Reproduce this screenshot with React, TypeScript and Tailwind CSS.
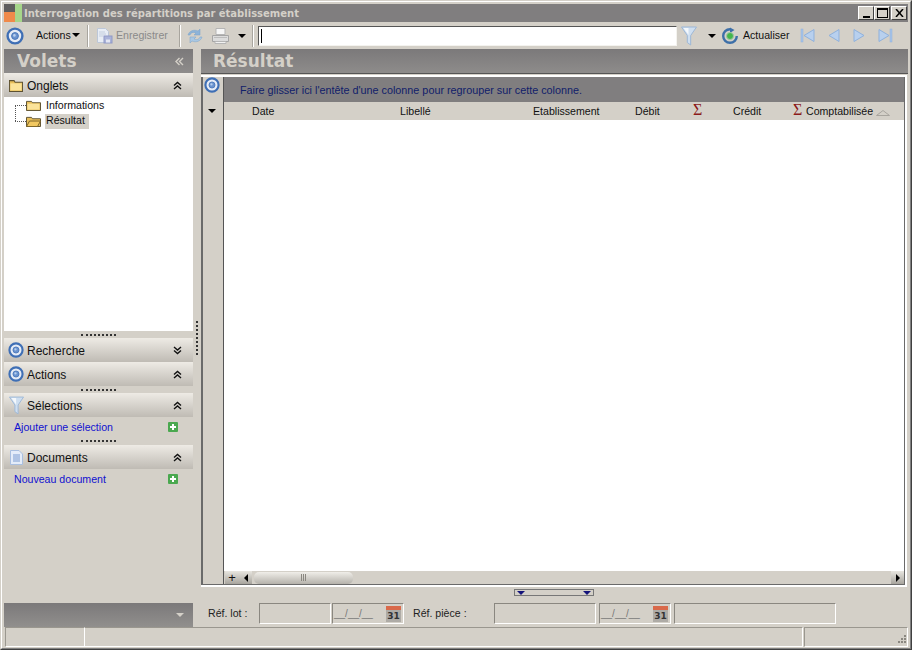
const TargetIcon = ({ size = 18 }: { size?: number }) => (
  <svg width={size} height={size} viewBox="0 0 18 18" className="shrink-0">
    <circle cx="9" cy="9" r="7.4" fill="#e6ecf6" stroke="#3f6fb5" strokeWidth="2.400" />
    <circle cx="9" cy="9" r="3.400" fill="#6a93cf" stroke="#4a78ba" />
    <circle cx="8.400" cy="8.400" r="1.300" fill="#b9d0ee" />
  </svg>
)

const Funnel = ({ size = 16 }: { size?: number }) => (
  <svg width={size} height={size + 4} viewBox="0 0 16 20" className="shrink-0">
    <path d="M.5 1h15L9.700 9.500v9.500l-3.400-2.500V9.500z" fill="#cfdff0" stroke="#9db7d6" />
    <path d="M2.500 2h5L7.500 9z" fill="#f4f8fc" />
  </svg>
)

const Folder = ({ open = false, w = 15, h = 11 }: { open?: boolean; w?: number; h?: number }) => (
  <svg width={w} height={h} viewBox="0 0 15 12" preserveAspectRatio="none" className="shrink-0">
    <path d="M.5 11.500V1.500h5l1 1.500h8v8.500z" fill="#e8bf5a" stroke="#5c5030" />
    {open ? <path d="M.5 11.500l3-6h11l-3 6z" fill="#f2c860" stroke="#7b6226" /> : <path d="M1.500 4h12v6.500h-12z" fill="#fbe39a" />}
  </svg>
)

const ChevronsUp = () => (
  <svg width="9" height="9" viewBox="0 0 9 9" className="shrink-0" fill="none" stroke="#111" strokeWidth="1.400">
    <path d="M1 4.500l3.500-3 3.500 3M1 8l3.500-3 3.500 3" />
  </svg>
)

const ChevronsDown = () => (
  <svg width="9" height="9" viewBox="0 0 9 9" className="shrink-0" fill="none" stroke="#111" strokeWidth="1.400">
    <path d="M1 1l3.500 3 3.500-3M1 4.500l3.500 3 3.500-3" />
  </svg>
)

const Caret = ({ color = "#000" }: { color?: string }) => (
  <svg width="8" height="4" viewBox="0 0 8 4" className="shrink-0">
    <path d="M0 0h8L4 4z" fill={color} />
  </svg>
)

const PlusGreen = () => (
  <svg width="10" height="10" viewBox="0 0 10 10" className="shrink-0">
    <rect width="10" height="10" rx="1" fill="#4aa84f" />
    <path d="M4 2h2v2h2v2H6v2H4V6H2V4h2z" fill="#fff" />
  </svg>
)

const DocIcon = () => (
  <svg width="13" height="15" viewBox="0 0 13 15" className="shrink-0">
    <path d="M.5.500h8.500l3.500 3.500v10.500H.5z" fill="#e4ecf9" stroke="#a9bfe0" />
    <path d="M3 5h7M3 7h7M3 9h7M3 11h7" stroke="#7b9bd0" />
  </svg>
)

const SaveIcon = () => (
  <svg width="18" height="18" viewBox="0 0 18 18" className="shrink-0">
    <path d="M1.500 1.500h8l3 3v11h-11z" fill="#e8edf5" stroke="#bcc7d8" />
    <path d="M3 5h6M3 7h7M3 9h4" stroke="#c3cede" />
    <rect x="8" y="9" width="8" height="7" fill="#aab3d9" stroke="#8f99c6" />
    <rect x="10" y="12.500" width="4" height="3" fill="#e4e7f3" />
  </svg>
)

const RefreshGray = () => (
  <svg width="18" height="18" viewBox="0 0 18 18" className="shrink-0">
    <path d="M2 8c1-4 6-6 10-4l2-2v6H8l2-2c-2-1-5-1-6 2z" fill="#8db3d8" stroke="#7ba2c8" strokeWidth=".5" />
    <path d="M16 10c-1 4-6 6-10 4l-2 2v-6h6l-2 2c2 1 5 1 6-2z" fill="#a9c8e4" stroke="#7ba2c8" strokeWidth=".5" />
  </svg>
)

const Printer = () => (
  <svg width="19" height="18" viewBox="0 0 19 18" className="shrink-0">
    <path d="M5 1.500h9v6H5z" fill="#f6f6f6" stroke="#b5b5b5" />
    <path d="M1.500 8.500h16v6h-16z" fill="#dcdcdc" stroke="#a5a5a5" />
    <path d="M4 14.500h11v2H4z" fill="#f2f2f2" stroke="#b5b5b5" />
    <path d="M3 10.500h13" stroke="#bcbcbc" />
  </svg>
)

const Reload = () => (
  <svg width="18" height="18" viewBox="0 0 18 18" className="shrink-0">
    <path d="M9 2.200a6.800 6.800 0 1 0 6.800 6.800" fill="none" stroke="#3d6fa8" strokeWidth="2.400" />
    <path d="M9 .5l4.500 2.500L9 6z" fill="#3d6fa8" />
    <circle cx="9" cy="9" r="3.500" fill="#43b54a" stroke="#9fc7a6" />
  </svg>
)

const NavIcon = ({ d, bar }: { d: string; bar?: number }) => (
  <svg width="15" height="15" viewBox="0 0 15 15" className="shrink-0">
    <path d={d} fill="#b8d0ee" stroke="#8fb1dc" />
    {bar !== undefined && <rect x={bar} y="1" width="2" height="13" fill="#a6c3e8" stroke="#8fb1dc" strokeWidth=".5" />}
  </svg>
)

const ToolSep = ({ ml }: { ml: string }) => <div className={`h-[22px] w-[2px] shrink-0 border-r border-l border-r-white border-l-[#a8a59e] ${ml}`} />

const WinButton = ({ children, ml = "" }: { children: React.ReactNode; ml?: string }) => (
  <div className={`flex h-[14px] w-[16px] items-center justify-center border border-t-white border-r-[#404040] border-b-[#404040] border-l-white bg-[#d4d0c8] ${ml}`}>
    {children}
  </div>
)

const SectionHeader = ({ icon, label, down }: { icon: React.ReactNode; label: string; down?: boolean }) => (
  <div className="flex h-[24px] shrink-0 items-center bg-linear-to-b from-[#eeebe5] to-[#bfbbb4] pr-[11px] text-[12px] text-[#111]">
    <div className="flex w-[23px] justify-center pl-[1px]">{icon}</div>
    <span className="mt-[1px] flex-1">{label}</span>
    {down ? <ChevronsDown /> : <ChevronsUp />}
  </div>
)

const Grip = ({ h = "h-[7px]" }: { h?: string }) => (
  <div className={`flex shrink-0 items-center justify-center ${h}`}>
    <div className="h-0 w-[35px] border-t-2 border-dotted border-[#333]" />
  </div>
)

const LinkRow = ({ label }: { label: string }) => (
  <div className="flex h-[20px] shrink-0 items-center justify-between pr-[15px] pl-[10px] text-[10.6px] text-[#1010d0]">
    <span className="mt-[1px]">{label}</span>
    <PlusGreen />
  </div>
)

const Sunken = ({ w, children }: { w: string; children?: React.ReactNode }) => (
  <div className={`flex h-[21px] items-center border border-t-[#8a8780] border-r-white border-b-white border-l-[#8a8780] ${w}`}>{children}</div>
)

const DateField = () => (
  <Sunken w="w-[72px]">
    <span className="flex-1 pl-[1px] text-[10px] text-[#777]">__/__/__</span>
    <div className="mr-[2px] flex h-[16px] w-[15px] flex-col bg-[#aeaba6]">
      <div className="h-[4px] bg-[#d9694a]" />
      <span className="text-center font-['DejaVu_Sans',sans-serif] text-[9px] leading-[12px] font-bold text-[#333]">31</span>
    </div>
  </Sunken>
)

const Column = ({ w, label, sigma, pad = "" }: { w: string; label?: string; sigma?: boolean; pad?: string }) => (
  <div className={`flex items-center ${w} ${pad}`}>
    {sigma && <span className="mb-[3px] font-['Liberation_Serif',serif] text-[16px] leading-[14px] text-[#8b1a1a]">Σ</span>}
    {label && <span className="mt-[1px]">{label}</span>}
  </div>
)

const ScrollBtn = ({ children, w }: { children: React.ReactNode; w: string }) => (
  <div className={`flex h-[13px] shrink-0 items-center justify-center bg-linear-to-b from-[#e8e6e0] to-[#a8a59e] ${w}`}>{children}</div>
)

const App = () => {
  return (
    <div className="h-[650px] w-[912px] overflow-hidden border border-t-[#d4d0c8] border-r-[#404040] border-b-[#404040] border-l-[#d4d0c8] font-['Liberation_Sans',sans-serif]">
      <div className="flex h-full flex-col border border-t-white border-r-[#808080] border-b-[#808080] border-l-white bg-[#d4d0c8] px-[2px] pt-[2px] pb-[1px]">
        <div className="flex h-[18px] shrink-0 items-center bg-[#807e7f] pr-[1px]">
          <svg width="18" height="18" viewBox="0 0 18 18" className="shrink-0">
            <rect width="18" height="18" fill="#5f5d5d" />
            <rect x="11" width="7" height="18" fill="#a6d68a" />
            <rect y="8" width="11" height="10" fill="#f08a4a" />
          </svg>
          <span className="ml-[2px] flex-1 font-['DejaVu_Sans',sans-serif] text-[10px] font-bold text-[#d4d0c8]">Interrogation des répartitions par établissement</span>
          <div className="flex">
            <WinButton><div className="mt-[7px] h-[2px] w-[7px] bg-black" /></WinButton>
            <WinButton><div className="h-[10px] w-[11px] border border-t-2 border-black" /></WinButton>
            <WinButton ml="ml-[1px]">
              <svg width="9" height="8" viewBox="0 0 9 8"><path d="M1 0l7 8M8 0L1 8" fill="none" stroke="#000" strokeWidth="1.500" /></svg>
            </WinButton>
          </div>
        </div>

        <div className="flex h-[27px] shrink-0 items-center text-[10.6px]">
          <div className="ml-[2px]"><TargetIcon /></div>
          <div className="ml-[12px] flex w-[44px] items-center justify-between text-[#111]">Actions<Caret /></div>
          <ToolSep ml="ml-[7px]" />
          <div className="ml-[7px]"><SaveIcon /></div>
          <span className="ml-[2px] w-[54px] text-[#8a8a8a]">Enregistrer</span>
          <ToolSep ml="ml-[9px]" />
          <div className="ml-[5px]"><RefreshGray /></div>
          <div className="ml-[7px]"><Printer /></div>
          <div className="ml-[8px]"><Caret /></div>
          <ToolSep ml="ml-[6px]" />
          <div className="ml-[4px] flex h-[20px] w-[419px] shrink-0 items-center border border-t-[#555] border-r-[#f4f3ef] border-b-[#f4f3ef] border-l-[#555] bg-white pl-[2px]">
            <div className="h-[14px] w-px bg-black" />
          </div>
          <div className="ml-[4px]"><Funnel /></div>
          <div className="ml-[11px]"><Caret /></div>
          <div className="ml-[5px]"><Reload /></div>
          <span className="ml-[4px] w-[47px] text-[#111]">Actualiser</span>
          <div className="ml-[10px] flex gap-[11px]">
            <NavIcon d="M14 1.500v12L4 7.500z" bar={1} />
            <NavIcon d="M13 1.500v12L3 7.500z" />
            <NavIcon d="M2 1.500v12l10-6z" />
            <NavIcon d="M1 1.500v12l10-6z" bar={12} />
          </div>
        </div>

        <div className="flex min-h-0 flex-1">
          <div className="flex w-[189px] shrink-0 flex-col">
            <div className="flex h-[24px] shrink-0 items-center justify-between bg-linear-to-b from-[#7b797a] to-[#8e8c8b] pr-[9px] pl-[13px]">
              <span className="font-['DejaVu_Sans',sans-serif] text-[17px] leading-none font-bold text-[#d4d0c8]">Volets</span>
              <svg width="9" height="9" viewBox="0 0 9 9" fill="none" stroke="#d4d0c8" strokeWidth="1.400">
                <path d="M4.500 1l-3.500 3.500 3.500 3.500M8 1L4.500 4.500 8 8" />
              </svg>
            </div>
            <SectionHeader icon={<Folder w={14} h={13} />} label="Onglets" />
            <div className="relative flex h-[234px] shrink-0 flex-col bg-white pl-[11px] text-[10.6px] text-[#111]">
              <div className="absolute top-[8px] left-[11px] h-[16px] w-0 border-l border-dotted border-[#555]" />
              <div className="flex h-[16px] items-center">
                <div className="h-px w-[11px] border-t border-dotted border-[#555]" />
                <Folder />
                <span className="mt-[1px] ml-[5px]">Informations</span>
              </div>
              <div className="flex h-[16px] items-center">
                <div className="h-px w-[11px] border-t border-dotted border-[#555]" />
                <Folder open />
                <span className="ml-[4px] flex h-[15px] w-[44px] items-center bg-[#d4d0c8] pl-[1px]">Résultat</span>
              </div>
            </div>
            <Grip />
            <SectionHeader icon={<TargetIcon size={16} />} label="Recherche" down />
            <SectionHeader icon={<TargetIcon size={16} />} label="Actions" />
            <Grip />
            <SectionHeader icon={<Funnel size={15} />} label="Sélections" />
            <LinkRow label="Ajouter une sélection" />
            <Grip h="h-[8px]" />
            <SectionHeader icon={<DocIcon />} label="Documents" />
            <LinkRow label="Nouveau document" />
            <div className="flex-1" />
            <div className="flex h-[24px] shrink-0 items-center justify-end bg-linear-to-b from-[#7b797a] to-[#918f8d] pr-[9px]">
              <Caret color="#d4d0c8" />
            </div>
          </div>

          <div className="flex w-[8px] shrink-0 flex-col items-center pt-[272px]">
            <div className="h-[34px] w-0 border-l-2 border-dotted border-[#333]" />
          </div>

          <div className="flex min-w-0 flex-1 flex-col">
            <div className="flex h-[25px] shrink-0 items-center border-b border-[#555] bg-linear-to-b from-[#7b797a] to-[#8e8c8b] pl-[12px]">
              <span className="font-['DejaVu_Sans',sans-serif] text-[17px] leading-none font-bold text-[#d4d0c8]">Résultat</span>
            </div>
            <div className="mt-[1px] mr-[1px] flex h-[512px] shrink-0 border-t-2 border-r-2 border-b-2 border-t-white border-r-white border-b-white">
              <div className="flex min-w-0 flex-1 border-r border-b border-l-2 border-r-[#6a6a6a] border-b-[#6a6a6a] border-l-[#6a6a6a]">
                <div className="flex w-[21px] shrink-0 flex-col items-center border-r border-[#555] bg-[#d4d0c8] pr-[3px]">
                  <div className="h-[25px]"><TargetIcon size={16} /></div>
                  <div className="flex h-[18px] items-center"><Caret /></div>
                </div>
                <div className="flex min-w-0 flex-1 flex-col">
                  <div className="flex h-[25px] shrink-0 items-center bg-[#807e7f] pt-[1px] pl-[16px] text-[10.8px] text-[#10206a]">
                    Faire glisser ici l'entête d'une colonne pour regrouper sur cette colonne.
                  </div>
                  <div className="flex h-[18px] shrink-0 items-center bg-[#d4d0c8] text-[10.6px] text-[#111]">
                    <Column w="w-[176px]" label="Date" pad="pl-[28px]" />
                    <Column w="w-[133px]" label="Libellé" />
                    <Column w="w-[102px]" label="Etablissement" />
                    <Column w="w-[58px]" label="Débit" />
                    <Column w="w-[40px]" sigma />
                    <Column w="w-[60px]" label="Crédit" />
                    <Column w="w-[13px]" sigma />
                    <Column w="w-[70px]" label="Comptabilisée" />
                    <svg width="14" height="6" viewBox="0 0 14 6" className="mt-[3px] shrink-0">
                      <path d="M.5 5.500h13L7 .5z" fill="none" stroke="#a8a59e" />
                    </svg>
                  </div>
                  <div className="min-h-0 flex-1 bg-white" />
                  <div className="flex h-[13px] shrink-0 items-center bg-[#d4d0c8] pl-[1px]">
                    <ScrollBtn w="w-[14px]"><span className="text-[13px] leading-none text-[#111]">+</span></ScrollBtn>
                    <ScrollBtn w="w-[13px]">
                      <svg width="4" height="8" viewBox="0 0 4 8"><path d="M4 0v8L0 4z" fill="#000" /></svg>
                    </ScrollBtn>
                    <div className="ml-[2px] flex h-[12px] w-[99px] items-center justify-center rounded-[5px] bg-linear-to-b from-[#f0eee9] to-[#b5b2ab]">
                      <div className="flex gap-[1px]">
                        <div className="h-[7px] w-px bg-[#8a8780]" />
                        <div className="h-[7px] w-px bg-[#8a8780]" />
                        <div className="h-[7px] w-px bg-[#8a8780]" />
                      </div>
                    </div>
                    <div className="flex-1" />
                    <ScrollBtn w="w-[13px]">
                      <svg width="4" height="8" viewBox="0 0 4 8"><path d="M0 0v8l4-4z" fill="#000" /></svg>
                    </ScrollBtn>
                  </div>
                </div>
              </div>
            </div>
            <div className="flex h-[16px] shrink-0 items-start pt-[2px] pl-[313px]">
              <div className="flex h-[7px] w-[80px] items-center justify-between border border-[#777] px-[2px]">
                <Caret color="#14147a" />
                <Caret color="#14147a" />
              </div>
            </div>
            <div className="flex h-[24px] shrink-0 items-start text-[10.6px] text-[#222]">
              <span className="ml-[7px] flex h-[21px] w-[51px] items-center">Réf. lot :</span>
              <Sunken w="w-[72px]" />
              <div className="ml-[1px]"><DateField /></div>
              <span className="ml-[9px] flex h-[21px] w-[81px] items-center">Réf. pièce :</span>
              <Sunken w="w-[102px]" />
              <div className="ml-[3px]"><DateField /></div>
              <div className="ml-[3px]"><Sunken w="w-[162px]" /></div>
            </div>
          </div>
        </div>

        <div className="flex h-[20px] shrink-0 pl-px">
          <div className="w-[80px] border border-t-[#9a978f] border-r-white border-b-white border-l-[#9a978f]" />
          <div className="w-[718px] border-t border-r border-b border-t-[#9a978f] border-r-white border-b-white" />
          <div className="ml-px flex flex-1 items-end justify-end border border-t-[#9a978f] border-r-white border-b-white border-l-[#9a978f]">
            <svg width="12" height="12" viewBox="0 0 12 12">
              <path d="M9 1h2v2H9zM6 4h2v2H6zM9 4h2v2H9zM3 7h2v2H3zM6 7h2v2H6zM9 7h2v2H9z" fill="#8a8780" />
            </svg>
          </div>
        </div>
      </div>
    </div>
  )
}

export default App
